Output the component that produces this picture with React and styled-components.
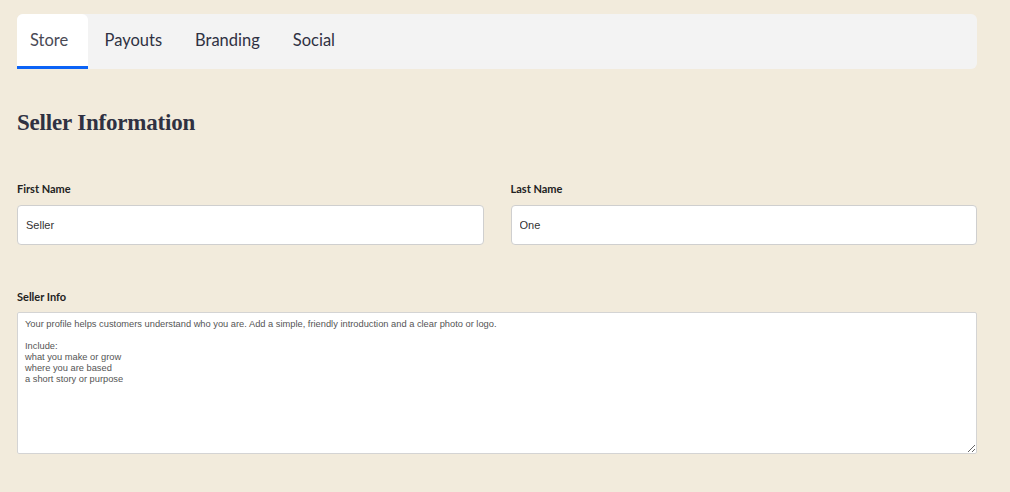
import React from 'react';
import styled, { createGlobalStyle } from 'styled-components';

const Global = createGlobalStyle`
  body { margin: 0; background: #f2ebdc; font-family: Lato, "Liberation Sans", sans-serif; }
`;

const Page = styled.div`
  width: 960px;
  padding: 14px 0 0 17px;
`;

const TabBar = styled.div`
  display: flex;
  height: 55px;
  background: #f3f3f3;
  border-radius: 6px;
`;

const Tab = styled.div`
  display: flex;
  align-items: center;
  padding: 0 ${(p) => (p.$first ? '13px' : '16.5px')};
  min-width: ${(p) => (p.$first ? '71px' : '0')};
  font-size: 16.5px;
  color: ${(p) => (p.$active ? '#4a4a55' : '#2f3142')};
  background: ${(p) => (p.$active ? '#fff' : 'transparent')};
  border-radius: 6px 6px 0 0;
  border-bottom: 3px solid ${(p) => (p.$active ? '#0b63f6' : 'transparent')};
  box-sizing: border-box;
`;

const Heading = styled.h2`
  margin: 41px 0 0;
  font-family: "Liberation Serif", serif;
  font-size: 23px;
  font-weight: bold;
  letter-spacing: -0.2px;
  color: #2f3142;
`;

const Row = styled.div`
  display: grid;
  grid-template-columns: 1fr 1fr;
  gap: 27px;
  margin-top: 46px;
`;

const Field = styled.div`
  display: flex;
  flex-direction: column;
`;

const Label = styled.label`
  font-size: 11px;
  font-weight: bold;
  color: #222;
  margin-bottom: 9px;
`;

const Input = styled.input`
  height: 40px;
  margin-top: 1px;
  box-sizing: border-box;
  border: 1px solid #cfcfcf;
  border-radius: 4px;
  padding: 0 8px;
  font-family: "Liberation Sans", Arial, sans-serif;
  font-size: 11px;
  color: #333;
  background: #fff;
`;

const Area = styled.textarea`
  height: 142px;
  box-sizing: border-box;
  border: 1px solid #d4d4d4;
  border-radius: 2px;
  padding: 6px 7px;
  font-family: "Liberation Sans", Arial, sans-serif;
  font-size: 9.3px;
  line-height: 11px;
  color: #555;
  background: #fff;
  resize: vertical;
`;

const InfoBlock = styled(Field)`
  margin-top: 45px;
`;

const text = `Your profile helps customers understand who you are. Add a simple, friendly introduction and a clear photo or logo.

Include:
what you make or grow
where you are based
a short story or purpose`;

export default function App() {
  return (
    <Page>
      <Global />
      <TabBar>
        <Tab $active $first>Store</Tab>
        <Tab>Payouts</Tab>
        <Tab>Branding</Tab>
        <Tab>Social</Tab>
      </TabBar>
      <Heading>Seller Information</Heading>
      <Row>
        <Field>
          <Label>First Name</Label>
          <Input defaultValue="Seller" />
        </Field>
        <Field>
          <Label>Last Name</Label>
          <Input defaultValue="One" />
        </Field>
      </Row>
      <InfoBlock>
        <Label>Seller Info</Label>
        <Area defaultValue={text} />
      </InfoBlock>
    </Page>
  );
}
